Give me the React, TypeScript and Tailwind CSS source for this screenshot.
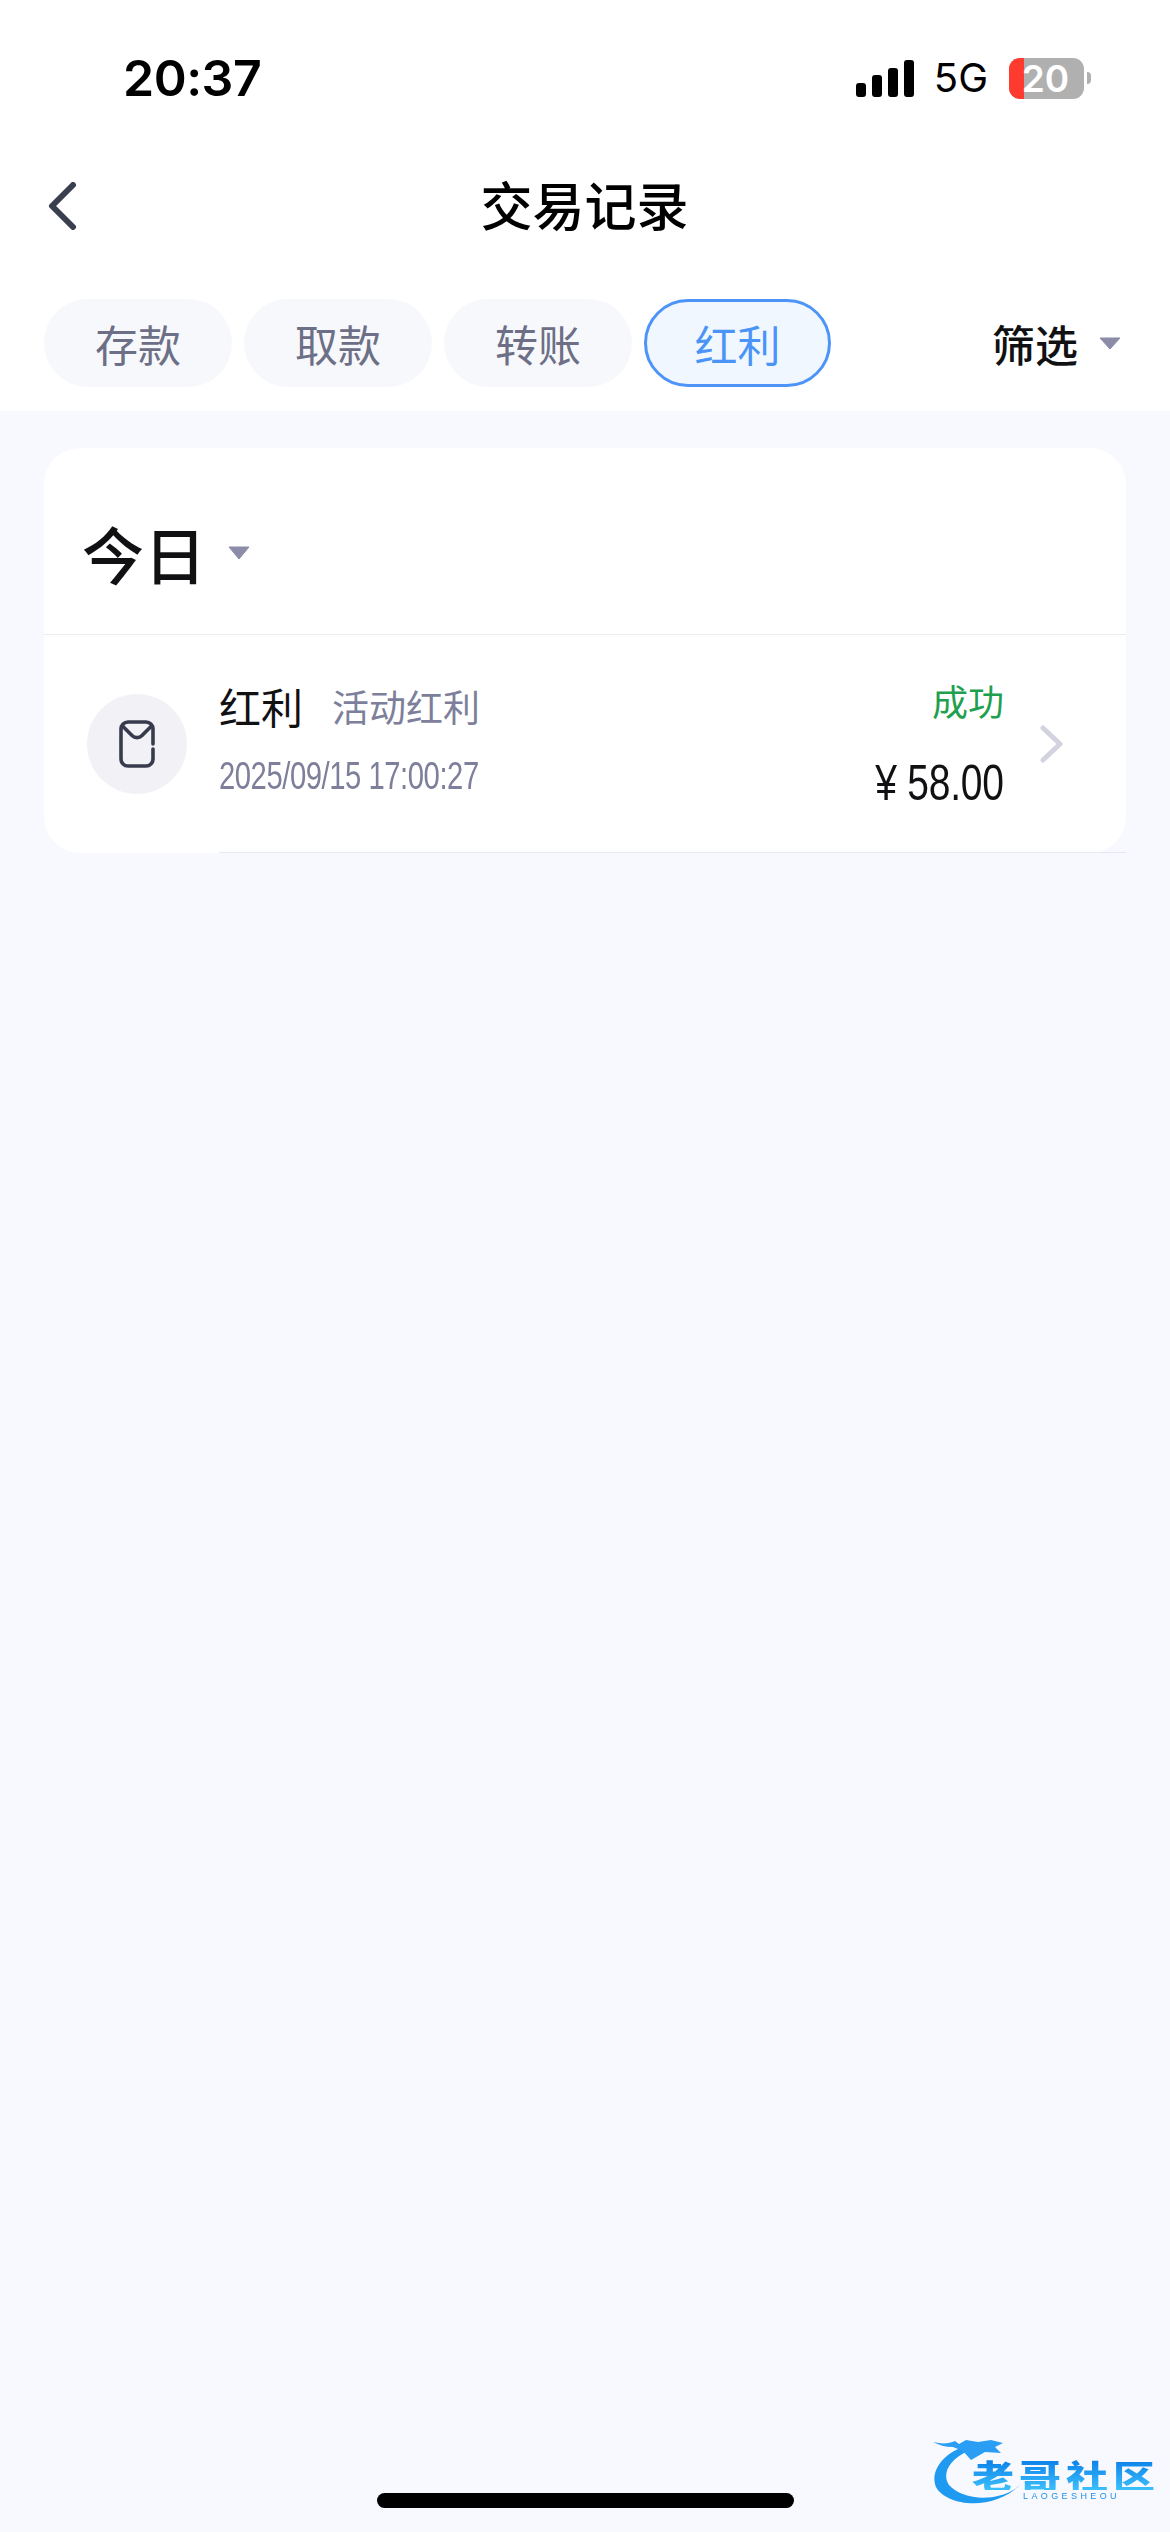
const cjk = 'font-["Noto_Sans_CJK_SC",sans-serif]';
const arial = 'font-["Liberation_Sans",sans-serif]';

const tabs = [
  { label: '存款', active: false },
  { label: '取款', active: false },
  { label: '转账', active: false },
  { label: '红利', active: true },
];

function StatusBar() {
  return (
    <div className="flex h-[156px] items-center justify-between pl-[123px] pr-[79px] font-['Inter',sans-serif] text-black">
      <span className="text-[50px] leading-none font-semibold tracking-[-0.5px]">20:37</span>
      <div className="flex items-center">
        <div className="flex h-[37px] items-end gap-[6px]">
          <span className="h-[14px] w-[10px] rounded-[3px] bg-black" />
          <span className="h-[22px] w-[10px] rounded-[3px] bg-black" />
          <span className="h-[29px] w-[10px] rounded-[3px] bg-black" />
          <span className="h-[37px] w-[10px] rounded-[3px] bg-black" />
        </div>
        <span className="ml-[20px] text-[40px] leading-none font-normal">5G</span>
        <div className="relative ml-[21px] flex h-[41px] w-[75px] rounded-[11px] bg-[#b0b0b0]">
          <div className="h-full w-[15px] rounded-l-[11px] bg-[#ff3b30]" />
          <span className="absolute inset-0 flex items-center justify-center pr-[2px] text-[37px] leading-none font-semibold text-white">20</span>
        </div>
        <span className="ml-[3px] h-[12px] w-[4px] rounded-r-full bg-[#b0b0b0]" />
      </div>
    </div>
  );
}

function Header() {
  return (
    <div className="relative flex h-[100px] items-center justify-center">
      <svg className="absolute top-[26px] left-[47px]" width="30" height="48" viewBox="0 0 30 48" fill="none">
        <path d="M26 3 L5 24 L26 45" stroke="#3a3f50" strokeWidth="6" strokeLinecap="round" strokeLinejoin="round" />
      </svg>
      <h1 className={`${cjk} mt-[-5px] ml-[-1px] text-[52px] leading-none font-medium text-black`}>交易记录</h1>
    </div>
  );
}

function Tabs() {
  return (
    <div className="flex items-center pt-[43px] pr-[49px] pb-[24px] pl-[44px]">
      <div className="flex gap-[12px]">
        {tabs.map((tab) => (
          <div
            key={tab.label}
            className={
              tab.active
                ? `${cjk} flex h-[88px] w-[187px] items-center justify-center rounded-[44px] border-[3px] border-[#4d94f8] bg-[#f0f7ff] text-[43px] text-[#4a94f8]`
                : `${cjk} flex h-[88px] w-[188px] items-center justify-center rounded-[44px] bg-[#f7f8fb] text-[43px] text-[#6c6f86]`
            }
          >
            {tab.label}
          </div>
        ))}
      </div>
      <div className="ml-auto flex items-center gap-[21px]">
        <span className={`${cjk} text-[43px] leading-none font-medium text-[#111114]`}>筛选</span>
        <svg width="22" height="13" viewBox="0 0 22 13"><path d="M1 1 H21 L11 12 Z" fill="#8b8ca8" stroke="#8b8ca8" strokeWidth="1" strokeLinejoin="round" /></svg>
      </div>
    </div>
  );
}

function RecordRow() {
  return (
    <div className="flex h-[218px]">
      <div className="flex w-[175px] shrink-0 items-center pl-[43px]">
        <div className="flex h-[100px] w-[100px] items-center justify-center rounded-full bg-[#f2f2f6]">
          <svg width="36" height="48" viewBox="0 0 36 48" fill="none" stroke="#373b4d" strokeWidth="3.6" strokeLinecap="round" strokeLinejoin="round">
            <path d="M34 24 V9 a7 7 0 0 0 -7 -7 H9 a7 7 0 0 0 -7 7 V39 a7 7 0 0 0 7 7 H27 a7 7 0 0 0 7 -7 V29" />
            <path d="M3.5 6 L13 15.5 a7 7 0 0 0 10 0 L32.5 6" />
          </svg>
        </div>
      </div>
      <div className="flex min-w-0 flex-1 items-center border-b border-[#e6e8f3] pr-[62px]">
        <div className="flex flex-1 flex-col pb-[8px]">
          <div className="flex items-center gap-[29px]">
            <span className={`${cjk} text-[42px] leading-[50px] text-[#111114]`}>红利</span>
            <span className={`${cjk} text-[37px] leading-[50px] text-[#7d7f9b]`}>活动红利</span>
          </div>
          <span className={`${arial} mt-[23px] w-fit origin-left scale-x-[0.77] text-[38px] leading-[44px] tracking-[-0.6px] text-[#7d7f9b]`}>2025/09/15 17:00:27</span>
        </div>
        <div className="flex flex-col items-end">
          <span className={`${cjk} text-[36px] leading-[44px] text-[#1ea04f]`}>成功</span>
          <span className={`${arial} mt-[34px] origin-right scale-x-[0.78] text-[50px] leading-[54px] tracking-[-0.3px] text-[#111114]`}>¥ 58.00</span>
        </div>
        <svg className="ml-[36px] shrink-0" width="24" height="38" viewBox="0 0 24 38" fill="none">
          <path d="M3 3 L20 19 L3 35" stroke="#d2d3de" strokeWidth="5" strokeLinecap="round" strokeLinejoin="round" />
        </svg>
      </div>
    </div>
  );
}

function Watermark() {
  return (
    <div className="absolute top-[2437px] left-[933px] h-[70px] w-[222px] blur-[0.6px]">
      <svg className="absolute top-0 left-0" width="90" height="70" viewBox="0 0 90 70">
        <path d="M30 10 C8 18 -3 36 3 50 C12 68 58 76 87 48 L82 52 C60 66 28 62 16 48 C8 36 18 22 33 15 Z" fill="#1e9bf0" />
        <path d="M0 5 C8 7 16 7 22 4 L26 7 L33 3 L45 5 L58 3 L70 6 L62 10 L68 16 L52 15 L38 23 L30 14 L20 10 C12 10 6 8 0 5 Z" fill="#2a9df4" />
      </svg>
      <span className={`${cjk} absolute top-[22px] left-[39px] origin-top scale-y-[0.78] bg-gradient-to-b from-[#0b7fe8] to-[#3cc0fb] bg-clip-text text-[42px] leading-[40px] font-black tracking-[5px] whitespace-nowrap text-transparent`}>老哥社区</span>
      <span className={`${arial} absolute top-[54px] left-[90px] text-[9px] leading-[10px] tracking-[3.4px] whitespace-nowrap text-[#1f8fe8]`}>LAOGESHEOU</span>
    </div>
  );
}

export default function App() {
  return (
    <div className="relative flex h-[2532px] w-[1170px] flex-col overflow-hidden bg-[#f8f9fe]">
      <div className="bg-white">
        <StatusBar />
        <Header />
        <Tabs />
      </div>
      <div className="px-[44px] pt-[37px]">
        <div className="rounded-[36px] bg-white">
          <div className="flex h-[187px] items-center gap-[22px] border-b border-[#ececf0] pt-[24px] pl-[38px]">
            <span className={`${cjk} text-[62px] leading-none font-medium text-[#111114]`}>今日</span>
            <svg width="22" height="14" viewBox="0 0 22 14"><path d="M1 1 H21 L11 13 Z" fill="#8b8ca8" stroke="#8b8ca8" strokeWidth="1" strokeLinejoin="round" /></svg>
          </div>
          <RecordRow />
        </div>
      </div>
      <div className="mt-auto mb-[24px] flex justify-center">
        <div className="h-[15px] w-[417px] rounded-full bg-black" />
      </div>
      <Watermark />
    </div>
  );
}
